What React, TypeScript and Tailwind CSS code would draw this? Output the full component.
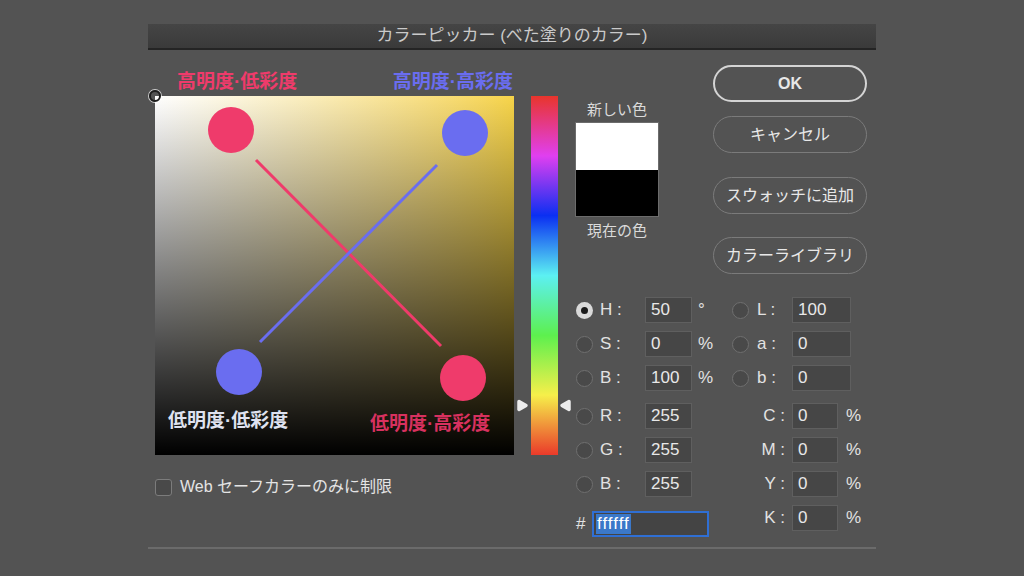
const FONT = "font-[family-name:'Liberation_Sans','Noto_Sans_CJK_JP',sans-serif]";

function Radio({ on }: { on?: boolean }) {
  if (on) {
    return (
      <div className="w-[17px] h-[17px] rounded-full bg-[#d9d9d9] flex items-center justify-center shrink-0">
        <div className="w-[7px] h-[7px] rounded-full bg-[#1a1a1a]" />
      </div>
    );
  }
  return <div className="w-[17px] h-[17px] rounded-full border-[1.5px] border-[#6f6f6f] bg-[#494949] shrink-0" />;
}

function Field({ value, w }: { value: string; w: string }) {
  return (
    <div className={`${w} h-[26px] bg-[#464646] border border-[#5f5f5f] flex items-center pl-[5px] text-[17px] text-[#e8e8e8] shrink-0`}>
      {value}
    </div>
  );
}

function Arrow({ dir }: { dir: "left" | "right" }) {
  return (
    <svg width="13" height="13" viewBox="0 0 13 13">
      {dir === "right" ? (
        <path d="M3 2.5 L10 6.5 L3 10.5 Z" fill="#ececec" stroke="#ececec" strokeWidth="3.5" strokeLinejoin="round" />
      ) : (
        <path d="M10 2.5 L3 6.5 L10 10.5 Z" fill="#ececec" stroke="#ececec" strokeWidth="3.5" strokeLinejoin="round" />
      )}
    </svg>
  );
}

export default function App() {
  const hsb = [
    { k: "H", v: "50", u: "°", on: true },
    { k: "S", v: "0", u: "%" },
    { k: "B", v: "100", u: "%" },
  ];
  const rgb = [
    { k: "R", v: "255" },
    { k: "G", v: "255" },
    { k: "B", v: "255" },
  ];
  const lab = [
    { k: "L", v: "100" },
    { k: "a", v: "0" },
    { k: "b", v: "0" },
  ];
  const cmyk = ["C", "M", "Y", "K"];

  return (
    <div className={`w-[1024px] h-[576px] bg-[#535353] pt-[24px] overflow-hidden ${FONT}`}>
      <div className="ml-[148px] w-[728px]">
        {/* title bar */}
        <div className="h-[26px] bg-linear-to-b from-[#454545] to-[#3a3a3a] border-b-2 border-[#242424] flex items-center justify-center text-[17px] text-[#cacaca]">
          カラーピッカー (べた塗りのカラー)
        </div>

        <div className="h-[497px] flex">
          {/* colour field */}
          <div className="ml-[7px] w-[359px]">
            <div className="h-[46px] flex items-end justify-between pl-[22px] pr-[1px] pb-[2px] text-[19px] font-bold leading-[24px]">
              <span className="text-[#ef3b6b]">高明度·低彩度</span>
              <span className="text-[#6a6df0]">高明度·高彩度</span>
            </div>
            <div className="relative w-[359px] h-[359px] bg-linear-to-r from-white to-[#f7d448]">
              <div className="absolute inset-0 bg-linear-to-t from-black to-transparent" />
              <svg className="absolute inset-0" width="359" height="359" viewBox="0 0 359 359">
                <line x1="101" y1="64" x2="286" y2="250" stroke="#ef3b6b" strokeWidth="3" />
                <line x1="282" y1="69" x2="105" y2="246" stroke="#6a6df0" strokeWidth="3" />
                <circle cx="76" cy="34" r="23" fill="#ef3b6b" />
                <circle cx="310" cy="37" r="23" fill="#6a6df0" />
                <circle cx="84" cy="276" r="23" fill="#6a6df0" />
                <circle cx="308" cy="282" r="23" fill="#ef3b6b" />
              </svg>
              <div className="absolute -left-[6px] -top-[6px] w-[12px] h-[12px] rounded-full border-2 border-[#1e1e1e] ring-1 ring-white/70" />
              <span className="absolute left-[13px] top-[313px] text-[19px] font-bold leading-[24px] text-[#dfe2f0]">低明度·低彩度</span>
              <span className="absolute left-[215px] top-[316px] text-[19px] font-bold leading-[24px] text-[#d8315f]">低明度·高彩度</span>
            </div>
            <div className="mt-[20px] flex items-center">
              <div className="w-[17px] h-[17px] rounded-[3px] border-[1.5px] border-[#7c7c7c] bg-[#494949]" />
              <span className="ml-[8px] text-[16px] text-[#e4e4e4]">Web セーフカラーのみに制限</span>
            </div>
          </div>

          {/* hue slider */}
          <div className="w-[61px] pt-[46px]">
            <div className="relative ml-[17px] w-[27px] h-[359px] bg-[linear-gradient(to_bottom,#e8352b,#e03ff0_16.7%,#0b2ff2_33.3%,#5cf0f2_50%,#5df04e_66.7%,#f6ef4a_83.3%,#ea3a2a)]">
              <div className="absolute -left-[15px] top-[303px]">
                <Arrow dir="right" />
              </div>
              <div className="absolute left-[28px] top-[303px]">
                <Arrow dir="left" />
              </div>
            </div>
          </div>

          {/* right side */}
          <div className="flex-1 flex flex-col">
            <div className="h-[247px] flex">
              <div className="w-[84px] pt-[51px] flex flex-col items-center text-[15px] leading-[18px] text-[#dadada]">
                <span>新しい色</span>
                <div className="mt-[3px] w-[84px] h-[95px] border border-[#6c6c6c] flex flex-col">
                  <div className="flex-1 bg-white" />
                  <div className="flex-1 bg-black" />
                </div>
                <span className="mt-[5px]">現在の色</span>
              </div>
              <div className="ml-[54px] pt-[15px] w-[154px] flex flex-col text-[16px] text-[#e8e8e8]">
                <div className="h-[37px] rounded-full border-2 border-[#d4d4d4] flex items-center justify-center font-bold">OK</div>
                <div className="mt-[14px] h-[37px] rounded-full border-[1.5px] border-[#7b7b7b] flex items-center justify-center">キャンセル</div>
                <div className="mt-[24px] h-[37px] rounded-full border-[1.5px] border-[#7b7b7b] flex items-center justify-center">スウォッチに追加</div>
                <div className="mt-[23px] h-[37px] rounded-full border-[1.5px] border-[#7b7b7b] flex items-center justify-center">カラーライブラリ</div>
              </div>
            </div>

            <div className="flex text-[17px] text-[#e2e2e2]">
              {/* HSB / RGB / hex */}
              <div className="ml-[1px] w-[156px] flex flex-col">
                <div className="flex flex-col gap-[8px]">
                  {hsb.map((r) => (
                    <div key={r.k} className="h-[26px] flex items-center">
                      <Radio on={r.on} />
                      <span className="ml-[7px] w-[45px]">{r.k} :</span>
                      <Field value={r.v} w="w-[47px]" />
                      <span className="ml-[6px]">{r.u}</span>
                    </div>
                  ))}
                </div>
                <div className="mt-[12px] flex flex-col gap-[8px]">
                  {rgb.map((r) => (
                    <div key={r.k} className="h-[26px] flex items-center">
                      <Radio />
                      <span className="ml-[7px] w-[45px]">{r.k} :</span>
                      <Field value={r.v} w="w-[47px]" />
                    </div>
                  ))}
                </div>
                <div className="mt-[14px] h-[26px] flex items-center">
                  <span className="w-[16px]">#</span>
                  <div className="w-[117px] h-[26px] border-2 border-[#2f6fd4] bg-[#444] flex items-center pl-[2px]">
                    <span className="bg-[#3b78c9] text-white px-[1px] tracking-[1px] leading-[20px]">ffffff</span>
                  </div>
                </div>
              </div>

              {/* Lab / CMYK */}
              <div className="w-[140px] flex flex-col">
                <div className="flex flex-col gap-[8px]">
                  {lab.map((r) => (
                    <div key={r.k} className="h-[26px] flex items-center">
                      <Radio />
                      <span className="ml-[8px] w-[35px]">{r.k} :</span>
                      <Field value={r.v} w="w-[59px]" />
                    </div>
                  ))}
                </div>
                <div className="mt-[12px] flex flex-col gap-[8px]">
                  {cmyk.map((k) => (
                    <div key={k} className="h-[26px] flex items-center">
                      <span className="w-[60px] text-right pr-[7px]">{k} :</span>
                      <Field value="0" w="w-[46px]" />
                      <span className="ml-[8px]">%</span>
                    </div>
                  ))}
                </div>
              </div>
            </div>
          </div>
        </div>

        <div className="h-[2px] bg-[#6b6b6b]" />
      </div>
    </div>
  );
}
